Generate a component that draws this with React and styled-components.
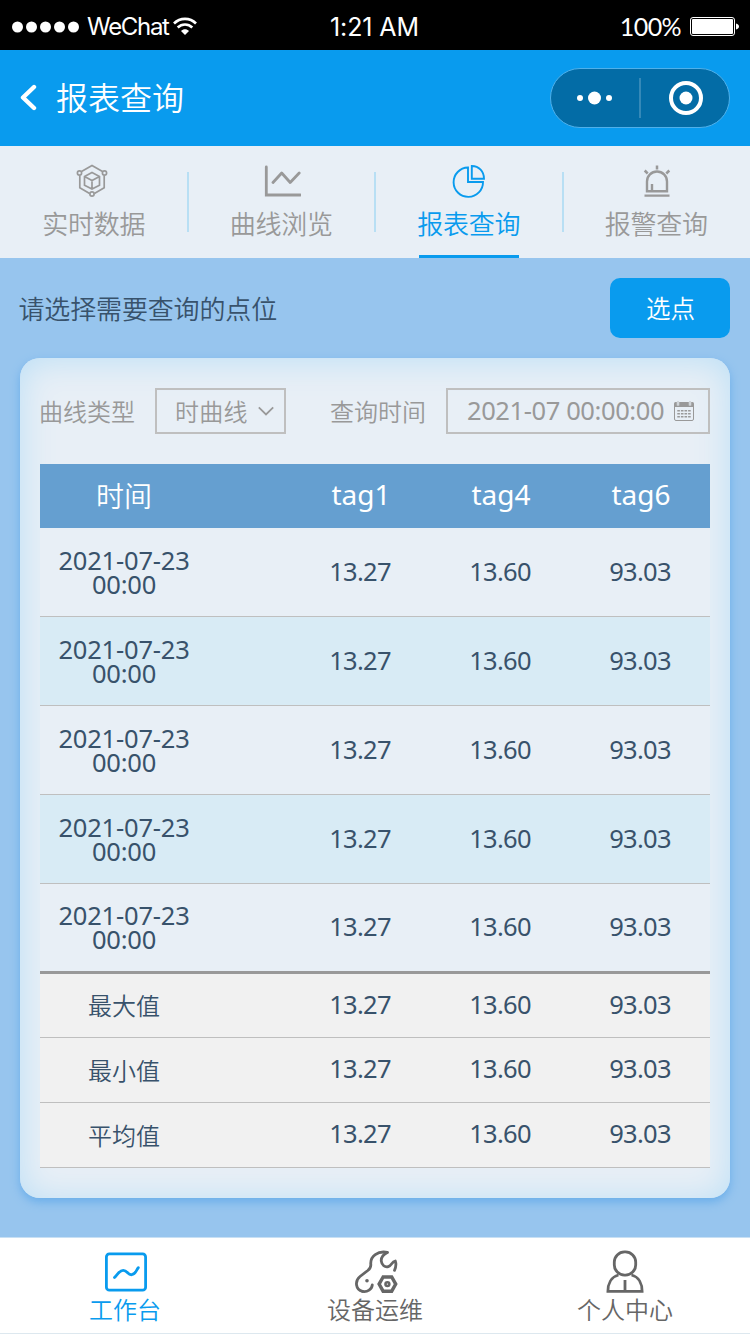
import React, { useState } from "react";
import styled, { createGlobalStyle } from "styled-components";

// -- -- --

const GlobalStyle = createGlobalStyle`
  :root {
    --blue: #099bee;
    --sky: #97c5ee;
    --mist: #e8eff6;
    --gray: #999999;
    --slate: #38526b;
  }

  * {
    box-sizing: border-box;
  }

  body {
    margin: 0;
    font-family: "Noto Sans", "Noto Sans CJK SC", sans-serif;
  }

  svg {
    display: block;
    flex: none;
  }

  button {
    padding: 0;
    border: 0;
    background: none;
    font: inherit;
    color: inherit;
  }
`;

const Screen = styled.div`
  display: flex;
  flex-direction: column;
  width: 750px;
  height: 1334px;
  background-color: var(--sky);
  overflow: hidden;
`;

// -- -- --

const StatusBar = styled.div`
  display: grid;
  grid-template-columns: 1fr auto 1fr;
  align-items: center;
  height: 50px;
  padding: 3px 11px 0 12px;
  font-family: Inter, sans-serif;
  font-size: 24px;
  line-height: 30px;
  color: white;
  background-color: black;
`;

const StatusGroup = styled.div`
  display: flex;
  align-items: center;
  justify-content: ${(props) => (props.$end ? "flex-end" : "flex-start")};
  gap: ${(props) => (props.$end ? "9px" : "4px")};
`;

const Carrier = styled.span`
  margin-left: 4px;
  letter-spacing: -1.3px;
`;

const Clock = styled.span`
  padding-right: 2px;
  font-size: 25px;
  letter-spacing: -0.1px;
`;

const Percent = styled.span`
  padding-bottom: 2px;
  font-family: Lato, sans-serif;
  font-size: 25px;
  letter-spacing: -0.6px;
`;

// -- -- --

const Header = styled.header`
  display: flex;
  align-items: center;
  height: 96px;
  padding: 0 20px;
  color: white;
  background-color: var(--blue);
`;

const Title = styled.h1`
  flex: 1;
  margin: 0 0 0 19px;
  font-size: 32px;
  font-weight: 350;
  line-height: 40px;
`;

const Capsule = styled.div`
  display: flex;
  align-items: center;
  width: 180px;
  height: 60px;
  border: 1px solid #4fb0ea;
  border-radius: 30px;
  background-color: #036ca6;
`;

const CapsuleButton = styled.button`
  display: flex;
  justify-content: center;
  width: 88px;
  padding-left: ${(props) => (props.$last ? "2px" : 0)};
`;

const CapsuleLine = styled.span`
  width: 2px;
  height: 40px;
  background-color: #3589b8;
`;

// -- -- --

const Tabs = styled.nav`
  display: flex;
  height: 112px;
  background-color: var(--mist);
`;

const TabDivider = styled.span`
  width: 2px;
  height: 60px;
  margin: 26px -1px 0;
  background-color: #b8dff4;
`;

const Tab = styled.button`
  display: flex;
  flex: 1;
  flex-direction: column;
  align-items: center;
  padding-top: 17px;
  font-size: 26px;
  font-weight: 350;
  line-height: 36px;
  color: ${(props) => (props.$active ? "var(--blue)" : "var(--gray)")};

  &::after {
    content: "";
    width: 100px;
    height: 3px;
    margin-top: auto;
    background-color: ${(props) => (props.$active ? "var(--blue)" : "transparent")};
  }
`;

const TabLabel = styled.span`
  margin-top: 7px;
  letter-spacing: -0.3px;
`;

// -- -- --

const PickRow = styled.div`
  display: flex;
  align-items: center;
  justify-content: space-between;
  height: 100px;
  padding: 0 20px 0 18.5px;
  font-size: 26px;
  color: var(--slate);
`;

const PickText = styled.span`
  font-weight: 350;
  letter-spacing: -0.15px;
`;

const PickButton = styled.button`
  width: 120px;
  height: 60px;
  padding: 0 0 1px 1px;
  font-size: 24.5px;
  font-weight: 350;
  color: white;
  border-radius: 10px;
  background-color: var(--blue);
`;

// -- -- --

const Card = styled.main`
  height: 840px;
  margin: 0 20px;
  padding: 30px 20px;
  border-radius: 20px;
  background-color: var(--mist);
  box-shadow:
    inset 0 2px 34px #bbdff6,
    0 4px 10px #6aaeea;
`;

const Filters = styled.div`
  display: flex;
  align-items: center;
  height: 46px;
  margin-bottom: 30px;
  font-size: 24px;
  font-weight: 350;
  line-height: 30px;
  color: var(--gray);
`;

const FilterLabel = styled.span`
  width: ${(props) => props.$width};
  margin-left: -1px;
  padding-top: 1px;
  white-space: nowrap;
`;

const Field = styled.button`
  display: flex;
  align-items: center;
  justify-content: space-between;
  width: ${(props) => props.$width};
  height: 46px;
  margin-right: ${(props) => props.$gap || 0};
  padding: ${(props) => props.$padding};
  border: 2px solid #bfbfbf;
`;

const TypeText = styled.span`
  padding-top: 1px;
  letter-spacing: 0.3px;
`;

const DateText = styled.span`
  padding-bottom: 2px;
  font-size: 25.5px;
  font-weight: 400;
  letter-spacing: -0.4px;
  white-space: nowrap;
`;

// -- -- --

/* the 82px track is the gutter between the time column and the readings */
const Row = styled.div`
  display: grid;
  grid-template-columns: 168px 82px repeat(3, 140px);
  align-items: center;
  height: 89px;
  text-align: center;
  color: var(--slate);
  border-bottom: 1px solid #bfbfbf;
  background-color: ${(props) => (props.$tinted ? "#d8ebf5" : "var(--mist)")};

  > :nth-child(2) {
    grid-column: 3;
  }
`;

const HeadRow = styled(Row)`
  height: 64px;
  padding-bottom: 1px;
  font-size: 28px;
  font-weight: 350;
  line-height: 36px;
  color: white;
  border: 0;
  background-color: #659fd0;
`;

const SummaryRow = styled(Row)`
  height: 65px;
  padding-bottom: 1px;
  background-color: #f1f1f1;
`;

const DataRows = styled.div`
  border-bottom: 3px solid #999999;

  > :last-child {
    height: 87px;
    border: 0;
  }

  + ${SummaryRow} {
    height: 64px;
  }
`;

const TagCell = styled.span`
  padding: 0 0 3px 2px;
  font-weight: 400;
`;

const ValueCell = styled.span`
  padding-bottom: 3px;
  font-size: 25.5px;
  line-height: 24px;
  letter-spacing: -0.7px;
`;

const DateCell = styled.span`
  padding: 0 15px 1px;
  font-size: 25.5px;
  line-height: 24px;
  letter-spacing: -0.2px;
`;

const NameCell = styled.span`
  padding-top: 2px;
  font-size: 24px;
  font-weight: 350;
  line-height: 24px;
`;

// -- -- --

const BottomBar = styled.footer`
  display: grid;
  grid-template-columns: repeat(3, 250px);
  height: 97px;
  margin-top: auto;
  border-top: 1px solid #c8e0f4;
  border-bottom: 1px solid #dde8ef;
  background-color: white;
`;

const BottomItem = styled.button`
  display: flex;
  flex-direction: column;
  align-items: center;
  justify-content: flex-start;
  padding-top: 12px;
  font-size: 24px;
  font-weight: 350;
  line-height: 32px;
  color: ${(props) => (props.$active ? "var(--blue)" : "#666666")};
`;

// -- -- --

const SignalDots = () => (
  <svg width="67" height="12" fill="currentColor">
    {[0, 1, 2, 3, 4].map((n) => (
      <circle key={n} cx={5.5 + n * 14} cy="6" r="5.5" />
    ))}
  </svg>
);

const WifiIcon = () => (
  <svg width="24" height="19" viewBox="0 0 24 19" fill="none" stroke="currentColor" strokeWidth="2.6">
    <path d="M1 6.5C7 .3 17 .3 23 6.5M4.7 10.5c4.2-4 10.4-4 14.6 0" />
    <path d="M8 14c2.3-2.2 5.7-2.2 8 0l-4 4z" fill="currentColor" stroke="none" />
  </svg>
);

const BatteryIcon = () => (
  <svg width="49" height="19" viewBox="0 0 49 19">
    <rect x=".5" y=".5" width="44" height="18" rx="2.5" fill="none" stroke="white" />
    <rect x="2" y="2" width="41" height="15" rx="1" fill="white" />
    <path d="M46 6.5c4 1 4 5 0 6z" fill="white" />
  </svg>
);

const BackIcon = () => (
  <svg width="17" height="28" viewBox="0 0 17 28" fill="none" stroke="currentColor" strokeWidth="4.4">
    <path d="M14 3 3 13.5 14 24" strokeLinecap="round" strokeLinejoin="round" />
  </svg>
);

const MoreIcon = () => (
  <svg width="36" height="14" fill="currentColor">
    <circle cx="3" cy="7" r="3" />
    <circle cx="17.5" cy="7" r="6.5" />
    <circle cx="32" cy="7" r="3" />
  </svg>
);

const TargetIcon = () => (
  <svg width="34" height="34">
    <circle cx="17" cy="17" r="15" fill="none" stroke="currentColor" strokeWidth="4" />
    <circle cx="17" cy="17" r="6.5" fill="currentColor" />
  </svg>
);

const CubeIcon = () => (
  <svg width="40" height="36" viewBox="0 0 40 36" fill="none" stroke="currentColor" strokeWidth="1.7">
    <path d="m7.5 8.5 10.5-6 10.5 6M5.8 12.5v12.2l9.8 5.8M30.2 12.5v12.2l-9.8 5.8" />
    <circle cx="5.5" cy="10" r="2.1" />
    <circle cx="30.5" cy="10" r="2.1" />
    <circle cx="18" cy="31" r="2.1" />
    <path d="m18 9.5 7.5 4v8.7L18 26l-7.5-3.8v-8.7zM10.5 13.5l7.5 4 7.5-4M18 17.5V26" />
  </svg>
);

const CurveIcon = () => (
  <svg width="40" height="36" viewBox="-3 0 40 36" fill="none" stroke="currentColor" strokeWidth="2.8">
    <path d="M2.3 4v28H36.5" strokeLinecap="round" />
    <path d="m9 19.5 8.7-9.5 8.5 9.5 9-9.5" strokeLinecap="round" strokeLinejoin="round" />
  </svg>
);

const PieIcon = () => (
  <svg width="34" height="36" viewBox="0 0 34 36" fill="none" stroke="currentColor" strokeWidth="1.9">
    <path d="M16 4.5A14.7 14.7 0 1 0 31 19H16z" />
    <path d="M19.8 3v12.8H32C32 8.5 27 3 19.8 3z" />
  </svg>
);

const AlarmIcon = () => (
  <svg width="30" height="36" viewBox="-2 0 30 36" fill="none" stroke="currentColor" strokeWidth="2.4">
    <path d="M4 28.3V18.5a10 10 0 0 1 20 0v9.8zM9 28v-7M1.5 32.6h25" />
    <path d="M14 2.5v4M1.7 7.5l3 3M26.3 7.5l-3 3" strokeWidth="2.5" />
  </svg>
);

const ChevronIcon = () => (
  <svg width="16" height="10" viewBox="0 0 16 10" fill="none" stroke="currentColor" strokeWidth="1.8">
    <path d="m.8 1.4 7.2 7 7.2-7" />
  </svg>
);

const CalendarIcon = () => (
  <svg width="20" height="20" viewBox="0 0 20 20">
    <rect x=".5" y="2.5" width="19" height="17" rx="1.5" fill="none" stroke="currentColor" />
    <path d="M0 6V2.5Q0 1 1.5 1h17Q20 1 20 2.5V6z" fill="currentColor" />
    <path d="M4 0v4.5M16 0v4.5" stroke="#e8eff6" strokeWidth="2.4" />
    <path d="M4 0v4M16 0v4" stroke="currentColor" strokeWidth=".6" />
    <path d="M3.3 9.8h14M3.3 12.8h14M3.3 15.8h14" stroke="currentColor" strokeWidth="1.5" strokeDasharray="2.6 1" />
  </svg>
);

const WorkbenchIcon = () => (
  <svg width="44" height="44" viewBox="-1 0 44 44" fill="none" stroke="currentColor" strokeWidth="2.8">
    <rect x="2.4" y="3.9" width="39.2" height="36.3" rx="3" />
    <path d="M10.5 27.5c3-3 5-7.2 8.7-7.2 4.4 0 4.6 5 8.6 4.4 3.6-.4 4-3.7 6.5-7" strokeLinecap="round" />
  </svg>
);

const RepairIcon = () => (
  <svg width="46" height="44" viewBox="-2 0 46 44" fill="none" stroke="currentColor" strokeWidth="2.8">
    <path
      d="M33.3 2.4C24 .6 16 6 16.8 14.5c.2 3-.4 3.9-3 6L6 26.5C.5 31 1.5 39.5 8.5 41.4"
      strokeLinecap="round"
    />
    <path d="M8.5 41.4c5 .8 9.3-2 9.8-6.6" strokeLinecap="round" />
    <path
      d="M33.3 2.4c-4.5 2.2-6.4 5-6 8.8.5 4 3.5 6.3 7 5.4 3.6-1 3.3-4.8 7-5.6 1 3 .7 6.2-.8 9.3"
      strokeLinecap="round"
      strokeLinejoin="round"
    />
    <circle cx="13" cy="30.7" r="1.8" fill="currentColor" stroke="none" />
    <path d="m29.1 27-4 7.1 4 7.1h8.6l4-7.1-4-7.1z" strokeWidth="3.4" />
    <circle cx="33.4" cy="34.1" r="3.2" fill="currentColor" stroke="none" />
    <circle cx="33.4" cy="34.1" r=".7" fill="white" stroke="none" />
  </svg>
);

const PersonIcon = () => (
  <svg width="40" height="44" viewBox="0 0 40 44" fill="none" stroke="currentColor" strokeWidth="2.8">
    <rect x="9.3" y="1.9" width="21.4" height="23.2" rx="10.2" />
    <path d="M13.5 25C6 26.8 2.9 34 2.9 41.4h34.2c0-7.4-3-14.6-10.6-16.4M20 30v11" />
  </svg>
);

// -- -- --

const tabs = [
  { label: "实时数据", Icon: CubeIcon },
  { label: "曲线浏览", Icon: CurveIcon },
  { label: "报表查询", Icon: PieIcon },
  { label: "报警查询", Icon: AlarmIcon },
];

const bottomItems = [
  { label: "工作台", Icon: WorkbenchIcon },
  { label: "设备运维", Icon: RepairIcon },
  { label: "个人中心", Icon: PersonIcon },
];

const tags = ["tag1", "tag4", "tag6"];
const readings = ["13.27", "13.60", "93.03"];
const times = Array(5).fill("2021-07-23 00:00");
const summaries = ["最大值", "最小值", "平均值"];

// -- -- --

function App() {
  const [tab, setTab] = useState(2);
  const [section, setSection] = useState(0);

  const cells = readings.map((value) => <ValueCell key={value}>{value}</ValueCell>);

  return (
    <Screen>
      <GlobalStyle />

      <StatusBar>
        <StatusGroup>
          <SignalDots />
          <Carrier>WeChat</Carrier>
          <WifiIcon />
        </StatusGroup>
        <Clock>1:21 AM</Clock>
        <StatusGroup $end>
          <Percent>100%</Percent>
          <BatteryIcon />
        </StatusGroup>
      </StatusBar>

      <Header>
        <BackIcon />
        <Title>报表查询</Title>
        <Capsule>
          <CapsuleButton>
            <MoreIcon />
          </CapsuleButton>
          <CapsuleLine />
          <CapsuleButton $last>
            <TargetIcon />
          </CapsuleButton>
        </Capsule>
      </Header>

      <Tabs>
        {tabs.map(({ label, Icon }, ii) => (
          <React.Fragment key={label}>
            {ii > 0 && <TabDivider />}
            <Tab $active={tab === ii} onClick={() => setTab(ii)}>
              <Icon />
              <TabLabel>{label}</TabLabel>
            </Tab>
          </React.Fragment>
        ))}
      </Tabs>

      <PickRow>
        <PickText>请选择需要查询的点位</PickText>
        <PickButton>选点</PickButton>
      </PickRow>

      <Card>
        <Filters>
          <FilterLabel $width="116px">曲线类型</FilterLabel>
          <Field $width="131px" $gap="45px" $padding="0 10px 0 18px">
            <TypeText>时曲线</TypeText>
            <ChevronIcon />
          </Field>
          <FilterLabel $width="116px">查询时间</FilterLabel>
          <Field $width="264px" $padding="0 14px 0 19px">
            <DateText>2021-07 00:00:00</DateText>
            <CalendarIcon />
          </Field>
        </Filters>

        <HeadRow>
          <span>时间</span>
          {tags.map((tag) => (
            <TagCell key={tag}>{tag}</TagCell>
          ))}
        </HeadRow>
        <DataRows>
          {times.map((time, ii) => (
            <Row key={ii} $tinted={ii % 2 === 1}>
              <DateCell>{time}</DateCell>
              {cells}
            </Row>
          ))}
        </DataRows>
        {summaries.map((name) => (
          <SummaryRow key={name}>
            <NameCell>{name}</NameCell>
            {cells}
          </SummaryRow>
        ))}
      </Card>

      <BottomBar>
        {bottomItems.map(({ label, Icon }, ii) => (
          <BottomItem key={label} $active={section === ii} onClick={() => setSection(ii)}>
            <Icon />
            <span>{label}</span>
          </BottomItem>
        ))}
      </BottomBar>
    </Screen>
  );
}

export default App;
